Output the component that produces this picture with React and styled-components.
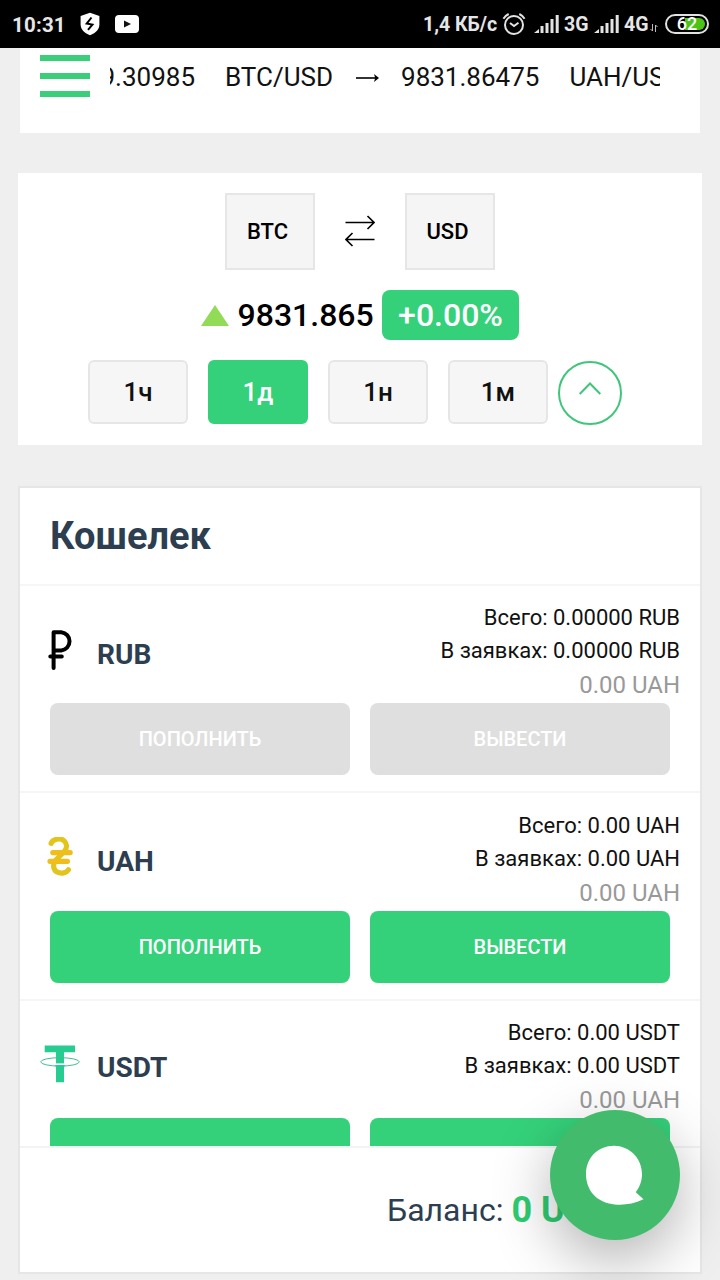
import React from "react";
import styled, { createGlobalStyle } from "styled-components";

const GlobalStyle = createGlobalStyle`
  * { box-sizing: border-box; }
  body { margin: 0; background: #efefef; font-family: Roboto, "Liberation Sans", sans-serif; color: #000; }
  button { font: inherit; margin: 0; padding: 0; }
  svg { display: block; flex: none; }
`;

const Screen = styled.div`
  position: relative;
  width: 720px;
  height: 1280px;
  overflow: hidden;
  background: #efefef;
`;

const StatusBar = styled.header`
  display: flex;
  align-items: center;
  height: 48px;
  padding: 0 11px 0 12px;
  background: #000;
  color: #e6e6e6;
  font-size: 19.5px;
  font-weight: 700;
  white-space: nowrap;
`;
const Clock = styled.span`
  width: 68px;
  padding-top: 1px;
  font-size: 20.5px;
  letter-spacing: 0.2px;
`;
const StatusSide = styled.div`
  display: flex;
  align-items: center;
  margin-left: auto;
`;
const StatusText = styled.span`
  width: ${(p) => p.$width}px;
  padding-top: ${(p) => p.$drop || 0}px;
`;

const Battery = styled.div`
  display: flex;
  align-items: center;
  justify-content: center;
  width: 44px;
  height: 20px;
  border: 2px solid #e2e2e2;
  border-radius: 10px;
  background: #000;
  padding: 2px;
  color: #fff;
  font-size: 18px;
  font-weight: 500;
  line-height: 12px;
`;
const BatteryLevel = styled.span`
  width: 36px;
  height: 12px;
  border-radius: 6px;
  background: linear-gradient(90deg, #000 45%, #4cc417 45%);
  text-align: center;
`;

const TickerBar = styled.section`
  display: flex;
  align-items: flex-start;
  width: 680px;
  height: 85px;
  margin: 0 auto 40px;
  padding: 7px 40px 0 20px;
  background: #fff;
`;
const MenuButton = styled.button`
  display: flex;
  flex-direction: column;
  gap: 12px;
  width: 50px;
  margin-right: 20px;
  border: 0;
  background: none;
`;
const MenuLine = styled.span`
  height: 6px;
  background: #3bce7a;
`;
const Ticker = styled.div`
  display: flex;
  flex: 1;
  justify-content: flex-start;
  gap: 30px;
  overflow: hidden;
  white-space: nowrap;
  font-size: 26px;
  line-height: 44px;
  color: #111;
`;
const TickerItem = styled.span`
  display: flex;
  flex: none;
  align-items: center;
  gap: 22px;
  &:first-child { justify-content: flex-end; width: 125px; margin-left: -40px; }
  svg { margin: 2px -1px 0 1px; }
`;

const RateCard = styled.section`
  display: flex;
  flex-direction: column;
  align-items: center;
  width: 684px;
  height: 272px;
  margin: 0 auto 41px;
  padding-top: 20px;
  background: #fff;
`;
const PairRow = styled.div`
  display: flex;
  align-items: center;
  gap: 30px;
  svg { margin-bottom: 2px; }
`;
const CurrencyBox = styled.button`
  width: 90px;
  height: 77px;
  padding-right: 5px;
  border: 2px solid #e6e6e6;
  background: #f5f5f5;
  color: #000;
  font-size: 22px;
  font-weight: 500;
`;
const PriceRow = styled.div`
  display: flex;
  align-items: center;
  height: 50px;
  margin-top: 20px;
  svg { margin-top: 1px; }
`;
const Price = styled.span`
  width: 153px;
  padding-left: 8.5px;
  font-size: 32px;
  font-weight: 500;
`;
const ChangeBadge = styled.span`
  width: 137px;
  height: 50px;
  border-radius: 8px;
  background: #35d17a;
  color: #fff;
  font-size: 32px;
  font-weight: 500;
  line-height: 51px;
  text-align: center;
`;
const RangeRow = styled.div`
  display: flex;
  align-items: flex-start;
  gap: 20px;
  margin-top: 20px;
  padding-right: 10px;
`;
const RangeButton = styled.button`
  width: 100px;
  height: 64px;
  border: 2px solid ${(p) => (p.$active ? "#35d17a" : "#e6e6e6")};
  border-radius: 6px;
  background: ${(p) => (p.$active ? "#35d17a" : "#f6f6f6")};
  color: ${(p) => (p.$active ? "#fff" : "#111")};
  font-size: 26px;
  font-weight: 500;
`;
const CollapseButton = styled.button`
  display: flex;
  align-items: center;
  justify-content: center;
  width: 64px;
  height: 64px;
  margin: 1px 0 0 -10px;
  padding-bottom: 9px;
  border: 2px solid #3fc67a;
  border-radius: 50%;
  background: #fff;
`;

const Wallet = styled.section`
  display: flex;
  flex-direction: column;
  width: 684px;
  height: 788px;
  margin: 0 auto;
  border: 2px solid #e6e6e6;
  background: #fff;
`;
const WalletTitle = styled.h2`
  height: 98px;
  margin: 0;
  padding-left: 30px;
  border-bottom: 2px solid #f6f6f6;
  color: #2c3e4f;
  font-size: 38px;
  font-weight: 700;
  line-height: 97px;
`;
const WalletList = styled.div`
  height: 560px;
  overflow: hidden;
`;
const WalletRow = styled.article`
  height: 207.4px;
  padding: 15.3px 20px 0;
  border-bottom: 2px solid #f6f6f6;
`;
const RowInfo = styled.div`
  display: flex;
  align-items: flex-start;
`;
const CoinIcon = styled.div`
  display: flex;
  justify-content: center;
  width: 40px;
  margin-top: ${(p) => 28.8 - p.$lift}px;
`;
const CoinName = styled.span`
  margin: ${(p) => 36.7 - p.$lift}px 0 0 17px;
  color: #2c3e4f;
  font-size: 28px;
  font-weight: 700;
  line-height: 33px;
`;
const Amounts = styled.div`
  flex: 1;
  height: 101.9px;
  color: #111;
  font-size: 22px;
  line-height: 33px;
  text-align: right;
  white-space: nowrap;
`;
const Converted = styled.div`
  color: #999;
  font-size: 24px;
  line-height: 36px;
`;
const Actions = styled.div`
  display: flex;
  gap: 20px;
  padding-left: 10px;
`;
const ActionButton = styled.button`
  width: 300px;
  height: 72px;
  border: 0;
  border-radius: 8px;
  background: #35d17a;
  color: #fff;
  font-size: 20px;
  font-weight: 500;
  &:disabled { background: #dfdfdf; }
`;
const BalanceBar = styled.footer`
  display: flex;
  flex: 1;
  align-items: center;
  padding-left: 367px;
  border-top: 2px solid #f3f3f3;
  color: #2c3e4f;
  font-size: 32px;
  white-space: nowrap;
`;
const BalanceValue = styled.b`
  margin-left: 8px;
  color: #2ecc71;
  font-size: 36px;
`;
const ChatButton = styled.button`
  position: absolute;
  right: 40px;
  bottom: 40px;
  display: flex;
  align-items: center;
  justify-content: center;
  width: 130px;
  height: 130px;
  border: 0;
  border-radius: 50%;
  background: #43bb6d;
  box-shadow: 0 20px 60px rgba(0, 0, 0, 0.3);
`;

const ShieldIcon = () => (
  <svg width="20" height="24" viewBox="0 0 20 24">
    <path d="M10 .8 19.4 4v8.2c0 5-3.3 8.5-9.4 11-6.1-2.5-9.4-6-9.4-11V4Z" fill="#fff" />
    <path d="m11.5 5.5-4.8 6.1 5.7 1-4.4 5.2" fill="none" stroke="#000" strokeWidth="2" />
  </svg>
);
const VideoIcon = () => (
  <svg width="24" height="18" viewBox="0 0 24 18">
    <rect width="24" height="18" rx="4" fill="#fff" />
    <path d="m9 5.5 7 3.4-7 3.6Z" fill="#111" />
  </svg>
);
const AlarmIcon = () => (
  <svg width="24" height="24" viewBox="0 0 24 24" fill="none" stroke="#e3e3e3" strokeWidth="2">
    <circle cx="12" cy="13" r="9" />
    <path d="m8 11 4 3 4.5-3.3M1.4 6.7A13 13 0 0 1 6.7 2M22.6 6.7A13 13 0 0 0 17.3 2" />
  </svg>
);
const SignalIcon = () => (
  <svg width="26" height="19" viewBox="0 0 26 19" fill="#e3e3e3">
    <path d="m0 18 5-4v4ZM6.5 11h3v7h-3ZM11.5 8h3v10h-3ZM16.5 4h3v14h-3ZM21.7 0h3v18h-3Z" />
  </svg>
);
const DataIcon = () => (
  <svg width="8" height="8" viewBox="0 0 8 8" fill="none" stroke="#bbb">
    <path d="M2.5 0v7M.5 5l2 2M5.5 8V1M7.5 3l-2-2" />
  </svg>
);
const RateArrow = () => (
  <svg width="24" height="10" viewBox="0 0 24 10">
    <path d="M0 5h20" stroke="#000" strokeWidth="1.6" />
    <path d="m18 1 5 4-5 4 1.2-4Z" />
  </svg>
);
const SwapIcon = () => (
  <svg width="30" height="32" viewBox="0 0 30 32" fill="none" stroke="#000" strokeWidth="1.6">
    <path d="M.5 7.5H29M22.5 1l6.5 6.5-6.5 6.5M29.5 24.5H1M7.5 18 1 24.5 7.5 31" />
  </svg>
);
const UpTriangle = () => (
  <svg width="28" height="21" viewBox="0 0 28 21">
    <path d="m14 0 14 21H0Z" fill="#91db57" />
  </svg>
);
const ChevronUp = () => (
  <svg width="22" height="13" viewBox="0 0 22 13">
    <path d="M.7 12 11 1.5 21.3 12" fill="none" stroke="#3fc67a" strokeWidth="2" />
  </svg>
);
const RubIcon = () => (
  <svg width="40" height="42" viewBox="0 0 40 42" fill="none" stroke="#000" strokeWidth="4" strokeLinecap="round" strokeLinejoin="round">
    <path d="M13.3 38V2.2h7.7a9.2 9.2 0 0 1 0 18.3h-7.7M10 26.4h11.5" transform="translate(.3 0)" />
  </svg>
);
const UahIcon = () => (
  <svg width="40" height="42" viewBox="0 0 40 42" fill="none" strokeLinecap="round" strokeWidth="5.2">
    <path d="M11.1 6.4C12.6 2 20 .8 23.5 3.3c3.6 2.8 3.6 7.2 1.5 10.2L15 24c-2.5 4.5-1.4 9.5 2.4 11.2 4 1.8 9 .8 11-2.4" stroke="#e3c41c" />
    <path d="M12.8 15.6h17.4M10 24.3h17.4" stroke="#efbd1c" />
  </svg>
);
const UsdtIcon = () => (
  <svg width="40" height="42" viewBox="0 0 40 42">
    <path d="M4.7 2.6H35V9.3H24v30h-8v-30H4.7Z" fill="#26cc92" />
    <ellipse cx="20" cy="18.9" rx="19.3" ry="4.2" fill="none" stroke="#40bd94" strokeWidth="1" />
    <path d="M16 20.4h8V22h-8Z" fill="#fff" />
    <path d="M15 22.9q5 .4 10 0" fill="none" stroke="#26cc92" />
  </svg>
);
const ChatIcon = () => (
  <svg width="60" height="60" viewBox="0 0 60 60">
    <path d="M29 .8C44 .8 57 13 57 29c0 7.5-2.5 13-6.2 18.2L58.5 54.2C46 60.2 34 60.6 24 58.4 9 55 1 43 1 29 1 13 13 .8 29 .8Z" fill="#fff" />
  </svg>
);

const coins = [
  { code: "RUB", amount: "0.00000", Icon: RubIcon, disabled: true },
  { code: "UAH", amount: "0.00", Icon: UahIcon },
  { code: "USDT", amount: "0.00", Icon: UsdtIcon, lift: 1.8 },
];
const ranges = ["1ч", "1д", "1н", "1м"];

const CoinRow = ({ code, amount, Icon, disabled, lift = 0 }) => (
  <WalletRow>
    <RowInfo>
      <CoinIcon $lift={lift}><Icon /></CoinIcon>
      <CoinName $lift={lift}>{code}</CoinName>
      <Amounts>
        <div>Всего: {amount} {code}</div>
        <div>В заявках: {amount} {code}</div>
        <Converted>0.00 UAH</Converted>
      </Amounts>
    </RowInfo>
    <Actions>
      <ActionButton disabled={disabled}>ПОПОЛНИТЬ</ActionButton>
      <ActionButton disabled={disabled}>ВЫВЕСТИ</ActionButton>
    </Actions>
  </WalletRow>
);

export default function App() {
  return (
    <Screen>
      <GlobalStyle />
      <StatusBar>
        <Clock>10:31</Clock>
        <StatusText $width={35}><ShieldIcon /></StatusText>
        <VideoIcon />
        <StatusSide>
          <StatusText $width={79} $drop={1}>1,4 КБ/с</StatusText>
          <StatusText $width={32}><AlarmIcon /></StatusText>
          <StatusText $width={30}><SignalIcon /></StatusText>
          <StatusText $width={30} $drop={1}>3G</StatusText>
          <StatusText $width={30}><SignalIcon /></StatusText>
          <StatusText $width={26} $drop={1}>4G</StatusText>
          <StatusText $width={15} $drop={8}><DataIcon /></StatusText>
          <Battery><BatteryLevel>62</BatteryLevel></Battery>
        </StatusSide>
      </StatusBar>
      <TickerBar>
        <MenuButton aria-label="Меню"><MenuLine /><MenuLine /><MenuLine /></MenuButton>
        <Ticker>
          <TickerItem>9.30985</TickerItem>
          <TickerItem>BTC/USD <RateArrow /> 9831.86475</TickerItem>
          <TickerItem>UAH/USD</TickerItem>
        </Ticker>
      </TickerBar>
      <RateCard>
        <PairRow>
          <CurrencyBox>BTC</CurrencyBox>
          <SwapIcon />
          <CurrencyBox>USD</CurrencyBox>
        </PairRow>
        <PriceRow>
          <UpTriangle />
          <Price>9831.865</Price>
          <ChangeBadge>+0.00%</ChangeBadge>
        </PriceRow>
        <RangeRow>
          {ranges.map((label, i) => <RangeButton key={label} $active={i === 1}>{label}</RangeButton>)}
          <CollapseButton aria-label="Свернуть"><ChevronUp /></CollapseButton>
        </RangeRow>
      </RateCard>
      <Wallet>
        <WalletTitle>Кошелек</WalletTitle>
        <WalletList>{coins.map((coin) => <CoinRow key={coin.code} {...coin} />)}</WalletList>
        <BalanceBar>Баланс:<BalanceValue>0 USD</BalanceValue></BalanceBar>
      </Wallet>
      <ChatButton aria-label="Чат"><ChatIcon /></ChatButton>
    </Screen>
  );
}
